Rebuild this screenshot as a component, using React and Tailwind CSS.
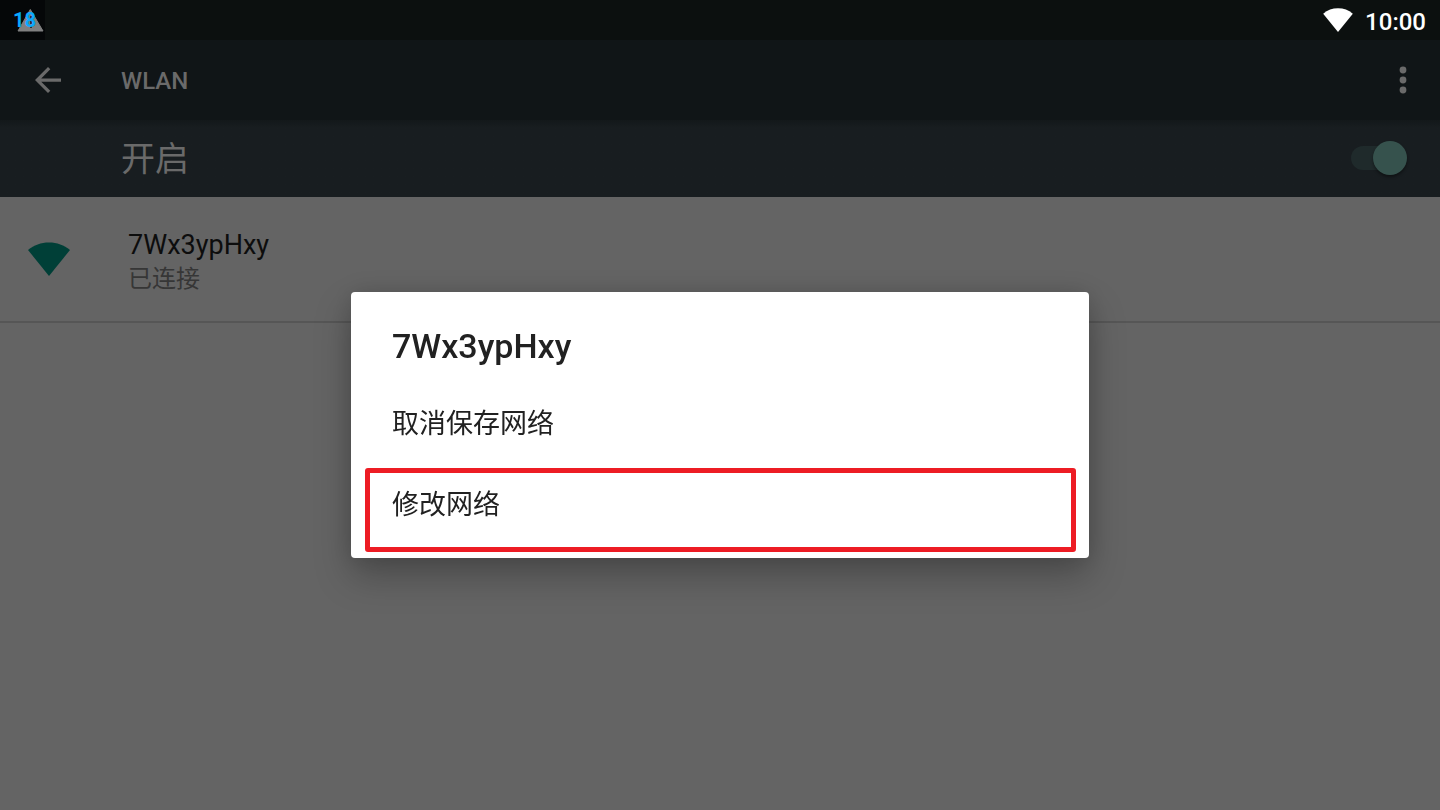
import React from "react";

function WifiFan({ className }) {
  return (
    <svg viewBox="0 0 42 34" className={className} fill="currentColor" aria-hidden="true">
      <path d="M0 8 C6 3 13 0.500 21 0.500 S36 3 42 8 L21 34 Z" />
    </svg>
  );
}

function StatusBar() {
  return (
    <div className="flex h-10 items-center justify-between bg-[#0c100f] pr-[14px]">
      <div className="flex h-full w-[45px] items-center bg-[#050708] pl-[13px]">
        <div className="relative h-6 w-8">
          <svg viewBox="0 0 32 24" className="h-6 w-8" aria-hidden="true">
            <path d="M17.300 1.500 L30 23 H5 Z" fill="#808080" stroke="#808080" strokeWidth="1" strokeLinejoin="round" />
            <path d="M17 8 H19 V16 H17 Z M17 18 H19 V20 H17 Z" fill="#303030" />
          </svg>
          <span className="absolute top-0 left-0 text-[20px] leading-6 font-bold text-[#09a9ff]">18</span>
        </div>
      </div>
      <div className="flex items-center gap-3 text-white">
        <WifiFan className="h-6 w-[30px]" />
        <span className="pt-1 text-[24px] leading-7 font-medium">10:00</span>
      </div>
    </div>
  );
}

function Toolbar() {
  return (
    <header className="flex h-20 items-center bg-[#101517] text-[#6a6a6a]">
      <button type="button" aria-label="返回" className="ml-[28px] flex h-10 w-10 items-center justify-center">
        <svg viewBox="4 4 16 16" className="h-[26px] w-[26px]" fill="currentColor" aria-hidden="true">
          <path d="M20 11H7.830l5.590-5.590L12 4l-8 8 8 8 1.410-1.410L7.830 13H20v-2z" />
        </svg>
      </button>
      <h1 className="ml-[53px] pt-[2px] text-[24px] leading-8 font-medium">WLAN</h1>
      <button type="button" aria-label="更多选项" className="mr-[17px] ml-auto flex h-10 w-10 items-center justify-center">
        <svg viewBox="0 0 8 28" className="h-7 w-2" fill="currentColor" aria-hidden="true">
          <circle cx="4" cy="4" r="3.400" />
          <circle cx="4" cy="14" r="3.400" />
          <circle cx="4" cy="24" r="3.400" />
        </svg>
      </button>
    </header>
  );
}

function SwitchBar() {
  return (
    <label htmlFor="wlan" className="flex h-[77px] items-center justify-between bg-[#181d20] bg-linear-to-b from-[#13181a] from-0% to-[#181d20] to-10% pr-[33px] pb-px pl-[121px]">
      <span className="pt-[2px] text-[34px] leading-10 text-[#6a6a6a]">开启</span>
      <span className="relative flex h-[34px] w-14 items-center">
        <input id="wlan" type="checkbox" role="switch" defaultChecked className="h-6 w-12 appearance-none rounded-full bg-[#1f2a2b]" />
        <span className="pointer-events-none absolute right-0 h-[34px] w-[34px] rounded-full bg-[#36524d] shadow-[0_2px_3px_rgba(0,0,0,0.4)]" />
      </span>
    </label>
  );
}

function NetworkRow() {
  return (
    <button type="button" className="flex h-[126px] w-full items-center border-b-2 border-[#565656] pl-[28px] text-left">
      <WifiFan className="h-[34px] w-[42px] text-[#003f37]" />
      <span className="ml-[58px] flex flex-col pt-[3px]">
        <span className="text-[27px] leading-9 text-[#0d0d0d]">7Wx3ypHxy</span>
        <span className="text-[24px] leading-8 text-[#363636]">已连接</span>
      </span>
    </button>
  );
}

function NetworkDialog() {
  return (
    <div className="fixed inset-x-0 top-10 bottom-0 flex items-center justify-center">
      <div
        role="dialog"
        aria-labelledby="dialog-title"
        className="w-[738px] max-w-full rounded-[4px] bg-white px-[14px] pt-[34px] pb-[6px] text-[#212121] shadow-[0_18px_36px_rgba(0,0,0,0.26),0_0_24px_rgba(0,0,0,0.12)]"
      >
        <h2 id="dialog-title" className="px-[27px] text-[34px] leading-10 font-medium">7Wx3ypHxy</h2>
        <button type="button" className="mt-4 flex h-[84px] w-full items-center px-[27px] text-left text-[27px] leading-10">
          取消保存网络
        </button>
        <div className="relative">
          <button type="button" className="flex h-[86px] w-full items-start px-[27px] pt-[19px] text-left text-[27px] leading-10">
            修改网络
          </button>
          <span className="pointer-events-none absolute top-[2px] right-[-1px] bottom-0 left-0 rounded-[3px] border-[5px] border-[#ed1c24]" />
        </div>
      </div>
    </div>
  );
}

export default function App() {
  return (
    <div className="min-h-screen bg-[#646464] font-[Roboto,'Noto_Sans_CJK_SC',sans-serif]">
      <StatusBar />
      <Toolbar />
      <SwitchBar />
      <main>
        <NetworkRow />
      </main>
      <NetworkDialog />
    </div>
  );
}
